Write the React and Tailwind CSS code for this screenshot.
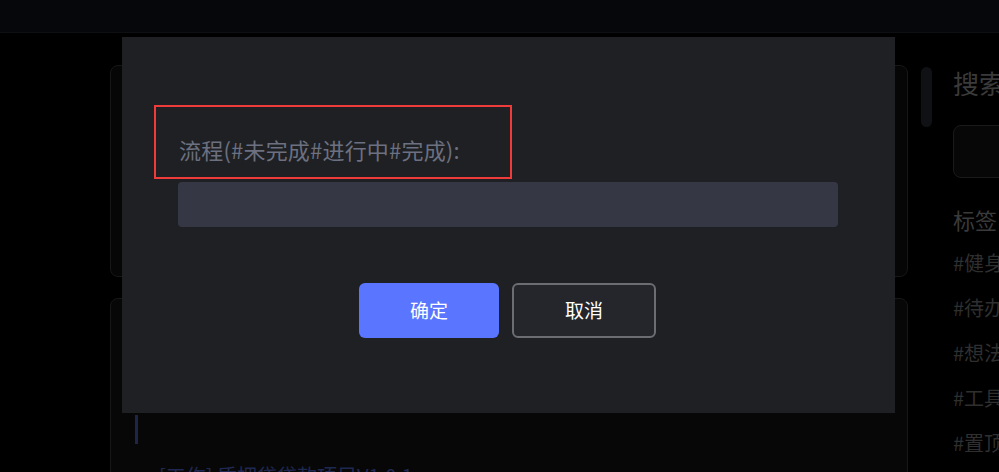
import React from "react";

const font = { fontFamily: '"Noto Sans CJK SC", "Noto Sans", sans-serif' };

function Sidebar() {
  const tags = ["#健身", "#待办", "#想法", "#工具", "#置顶"];
  return (
    <div className="ml-[21px] flex w-[200px] shrink-0 flex-col pt-[30px]">
      <h2 className="text-[26px] leading-[40px] text-[#3a3a3a]">搜索</h2>
      <div className="mt-[22px] h-[53px] w-[200px] rounded-lg border border-[#1a1a1a] bg-[#070707]" />
      <h3 className="mt-[25px] text-[22px] leading-[32px] text-[#3a3a3a]">标签</h3>
      <ul className="mt-[13px] flex flex-col gap-[15px]">
        {tags.map((t) => (
          <li key={t} className="text-[20px] leading-[30px] text-[#2f2f2f]">
            {t}
          </li>
        ))}
      </ul>
    </div>
  );
}

function Dialog() {
  return (
    <div className="absolute left-[122px] top-[37px] flex h-[376px] w-[773px] flex-col bg-[#1e2023]">
      <div className="ml-[32px] mt-[68px] flex h-[74px] w-[358px] items-end border-2 border-[#f03b3b] pb-[13px] pl-[23px]">
        <label className="text-[22px] leading-[30px] tracking-[0.2px] text-[#6c7080]">流程(#未完成#进行中#完成):</label>
      </div>
      <div className="ml-[56px] mt-[3px] h-[45px] w-[660px] rounded bg-[#353745]" />
      <div className="mt-[56px] flex justify-center gap-[13px] pr-[2px]">
        <button className="h-[55px] w-[140px] rounded-md bg-[#5a75ff] text-[19px] text-white">确定</button>
        <button className="h-[55px] w-[144px] rounded-md border-2 border-[#6b6d72] bg-[#25262b] text-[19px] text-white">
          取消
        </button>
      </div>
    </div>
  );
}

export default function App() {
  return (
    <div className="relative h-[472px] w-full overflow-hidden bg-black" style={font}>
      <header className="h-[33px] border-b border-[#0e0f13] bg-[#06070a]" />
      <div className="flex">
        <main className="ml-[110px] flex w-[798px] shrink-0 flex-col gap-[21px] pt-[32px]">
          <section className="h-[212px] rounded-lg border border-[#171717] bg-[#060606]" />
          <section className="h-[200px] rounded-lg border border-[#171717] bg-[#070707] pl-[24px] pt-[116px]">
            <div className="h-[29px] w-[3px] bg-[#1e2547]" />
            <div className="mt-[17px] flex items-center gap-[16px]">
              <span className="h-[8px] w-[8px] rounded-full bg-[#2a2d40]" />
              <span className="text-[20px] leading-[30px] text-[#1f2852]">[工作] 质押贷贷款项目V1.0.1</span>
            </div>
          </section>
        </main>
        <div className="ml-[13px] mt-[34px] h-[60px] w-[11px] shrink-0 rounded-full bg-[#101114]" />
        <Sidebar />
      </div>
      <Dialog />
    </div>
  );
}
